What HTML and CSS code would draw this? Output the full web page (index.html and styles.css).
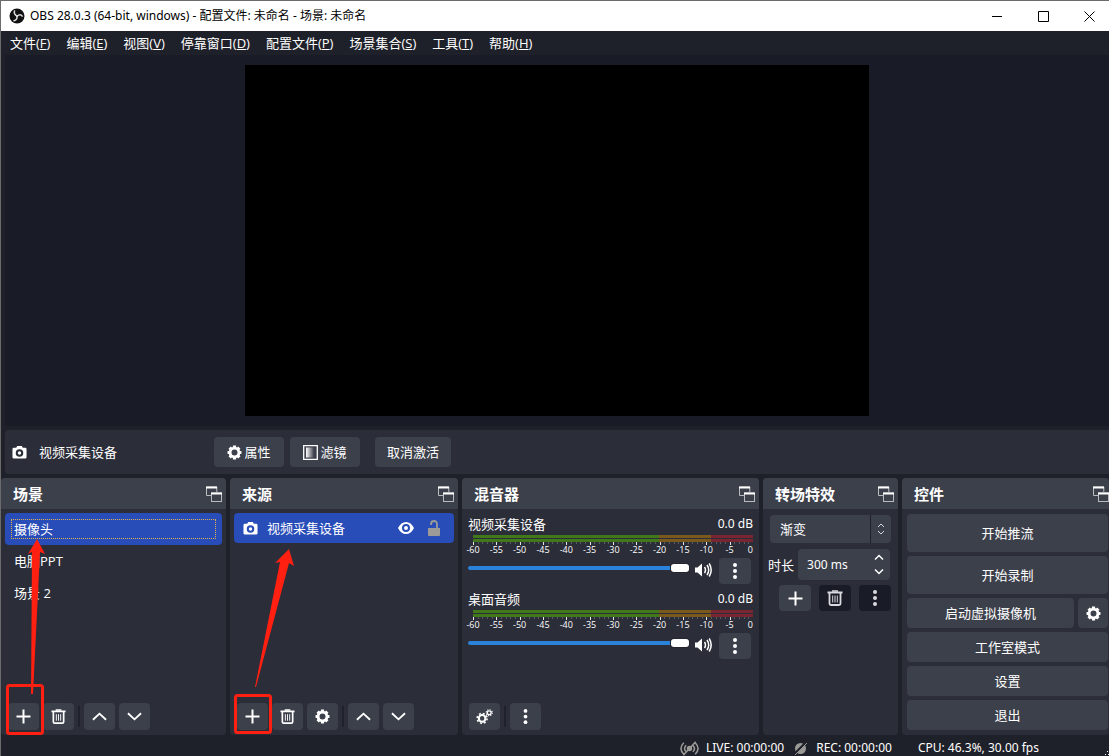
FILE: index.html
```html
<!DOCTYPE html>
<html lang="zh-CN">
<head>
<meta charset="utf-8">
<title>OBS 28.0.3</title>
<link rel="stylesheet" href="styles.css">
</head>
<body>
<svg class="defs" aria-hidden="true">
  <defs>
    <symbol id="i-camera" viewBox="0 0 16 16"><path fill-rule="evenodd" d="M2 3h2.500l1-2h5l1 2H14q1.500 0 1.500 1.500v8.500q0 1.500-1.500 1.500H2q-1.500 0-1.500-1.500V4.500Q.5 3 2 3zM8 4.500a4 4 0 1 0 0 8 4 4 0 0 0 0-8zm0 2.200a1.800 1.800 0 1 1 0 3.600 1.800 1.800 0 0 1 0-3.600z"/></symbol>
    <symbol id="i-gear" viewBox="0 0 16 16"><circle cx="8" cy="8" r="4.700" fill="none" stroke="currentColor" stroke-width="3"/><path d="M8 .6v3M8 12.400v3M.6 8h3M12.400 8h3M2.800 2.800l2 2M11.200 11.200l2 2M2.800 13.200l2-2M11.200 4.800l2-2" stroke="currentColor" stroke-width="3.400"/></symbol>
    <symbol id="i-gears" viewBox="0 0 18 18"><g fill="none" stroke="currentColor"><circle cx="6.500" cy="11" r="3.500" stroke-width="2.200"/><circle cx="6.500" cy="11" r="5.300" stroke-width="1.600" stroke-dasharray="2.100 2.060"/><circle cx="14" cy="5" r="2" stroke-width="1.400"/><circle cx="14" cy="5" r="3.200" stroke-width="1.200" stroke-dasharray="1.260 1.250"/></g></symbol>
    <symbol id="i-plus" viewBox="0 0 15 15"><path d="M7.500 .5v14M.5 7.500h14" fill="none" stroke="currentColor" stroke-width="2"/></symbol>
    <symbol id="i-trash" viewBox="0 0 16 16"><g fill="none" stroke="currentColor"><path d="M.5 2.500h15" stroke-width="2"/><path d="M5 1h6" stroke-width="1.500"/><path d="M2.500 3v10.500q0 1.500 1.500 1.500h8q1.500 0 1.500-1.500V3" stroke-width="1.800"/><path d="M5.700 5.500v7M8 5.500v7M10.300 5.500v7" stroke-width="1"/></g></symbol>
    <symbol id="i-up" viewBox="0 0 16 16"><path d="M1 11.500L8 5l7 6.500" fill="none" stroke="currentColor" stroke-width="2"/></symbol>
    <symbol id="i-down" viewBox="0 0 16 16"><path d="M1 4.500L8 11l7-6.500" fill="none" stroke="currentColor" stroke-width="2"/></symbol>
    <symbol id="i-dots" viewBox="0 0 16 16"><circle cx="8" cy="2" r="2"/><circle cx="8" cy="8" r="2"/><circle cx="8" cy="14" r="2"/></symbol>
    <symbol id="i-float" viewBox="0 0 16 16"><g fill="none" stroke="currentColor"><path d="M5 9.500H.5V1h10.300v5" stroke="#b9bbc0"/><path d="M0 1.500h11" stroke-width="2"/><rect x="5.500" y="7" width="10" height="8.500" stroke="#b9bbc0"/><path d="M5 7.500h11" stroke-width="2"/></g></symbol>
    <symbol id="i-speaker" viewBox="0 0 17 16"><path d="M0 5.500h2.500L7 1.500v13L2.500 10.500H0z"/><path d="M9.500 5q2 3 0 6M12 3q3.400 5 0 10M14.200 1.500q4 6.500 0 13" fill="none" stroke="currentColor" stroke-width="1.500"/></symbol>
  </defs>
</svg>

<div class="window">
  <header class="titlebar">
    <svg class="logo" viewBox="0 0 16 16" aria-hidden="true"><circle cx="8" cy="8" r="7.500" fill="#111"/><g fill="none" stroke="#ddd" stroke-width="1.500" stroke-linecap="round"><path d="M8 8.200Q4.500 6 5.500 3"/><path d="M8 8.200Q11.500 5.500 13.200 8.200"/><path d="M8 8.200Q8.500 12 5 12.700"/></g></svg>
    <h1 class="title">OBS 28.0.3 (64-bit, windows) - 配置文件: 未命名 - 场景: 未命名</h1>
    <div class="winbuttons">
      <button aria-label="最小化"><svg viewBox="0 0 11 11"><path d="M0 5.500h10"/></svg></button>
      <button aria-label="最大化"><svg viewBox="0 0 11 11"><path d="M.5.5h10v10H.5z"/></svg></button>
      <button aria-label="关闭"><svg viewBox="0 0 11 11"><path d="M.5.5l10 10M10.500.5l-10 10"/></svg></button>
    </div>
  </header>

  <nav class="menubar">
    <button>文件(<u>F</u>)</button><button>编辑(<u>E</u>)</button><button>视图(<u>V</u>)</button><button>停靠窗口(<u>D</u>)</button><button>配置文件(<u>P</u>)</button><button>场景集合(<u>S</u>)</button><button>工具(<u>T</u>)</button><button>帮助(<u>H</u>)</button>
  </nav>

  <main class="preview"><div class="canvas"></div></main>

  <section class="context">
    <svg class="icon15"><use href="#i-camera"/></svg>
    <span class="context-name">视频采集设备</span>
    <div class="context-actions">
      <button class="btn"><svg class="icon15"><use href="#i-gear"/></svg>属性</button>
      <button class="btn"><svg class="icon15" viewBox="0 0 15 15"><defs><linearGradient id="fade"><stop offset="0" stop-color="#fff"/><stop offset="1" stop-color="#fff" stop-opacity="0"/></linearGradient></defs><path d="M.7.7h13.600v13.600H.7z" fill="none" stroke="#fff" stroke-width="1.300"/><path d="M3 2.500h8v10H3z" fill="url(#fade)"/></svg>滤镜</button>
      <button class="btn deactivate">取消激活</button>
    </div>
  </section>

  <div class="docks">
    <section class="dock">
      <header><h2>场景</h2><svg class="icon16"><use href="#i-float"/></svg></header>
      <ul class="list">
        <li class="scene selected"><span>摄像头</span></li>
        <li class="scene"><span>电脑PPT</span></li>
        <li class="scene"><span>场景 2</span></li>
      </ul>
      <div class="tools">
        <button class="tool" aria-label="添加"><svg class="icon15"><use href="#i-plus"/></svg></button>
        <button class="tool" aria-label="删除"><svg class="icon15"><use href="#i-trash"/></svg></button>
        <i class="sep"></i>
        <button class="tool" aria-label="上移"><svg class="icon15"><use href="#i-up"/></svg></button>
        <button class="tool" aria-label="下移"><svg class="icon15"><use href="#i-down"/></svg></button>
      </div>
    </section>

    <section class="dock">
      <header><h2>来源</h2><svg class="icon16"><use href="#i-float"/></svg></header>
      <ul class="list">
        <li class="source selected"><svg class="icon15"><use href="#i-camera"/></svg><span>视频采集设备</span>
          <svg class="eye" viewBox="0 0 16 12"><path fill-rule="evenodd" d="M0 6Q3 0 8 0t8 6q-3 6-8 6T0 6zm8-4a4 4 0 1 0 0 8 4 4 0 0 0 0-8zm0 2a2 2 0 1 1 0 4 2 2 0 0 1 0-4z"/></svg>
          <svg class="lock" viewBox="0 0 12 16"><path d="M0 8h12v7q0 1-1 1H1q-1 0-1-1z"/><path d="M9 8V4.500Q9 1 6 1T3 4.500V5" fill="none" stroke="currentColor" stroke-width="1.800"/></svg>
        </li>
      </ul>
      <div class="tools">
        <button class="tool" aria-label="添加"><svg class="icon15"><use href="#i-plus"/></svg></button>
        <button class="tool" aria-label="删除"><svg class="icon15"><use href="#i-trash"/></svg></button>
        <button class="tool" aria-label="属性"><svg class="icon15"><use href="#i-gear"/></svg></button>
        <i class="sep"></i>
        <button class="tool" aria-label="上移"><svg class="icon15"><use href="#i-up"/></svg></button>
        <button class="tool" aria-label="下移"><svg class="icon15"><use href="#i-down"/></svg></button>
      </div>
    </section>

    <section class="dock">
      <header><h2>混音器</h2><svg class="icon16"><use href="#i-float"/></svg></header>
      <div class="mixer">
        <div class="channel">
          <div class="channel-head"><label for="v1">视频采集设备</label><span class="latin">0.0 dB</span></div>
          <div class="meter"><div class="bar"></div><div class="bar"></div><div class="ticks"></div>
            <div class="scale"><span>-60</span><span>-55</span><span>-50</span><span>-45</span><span>-40</span><span>-35</span><span>-30</span><span>-25</span><span>-20</span><span>-15</span><span>-10</span><span>-5</span><span>0</span></div>
          </div>
          <div class="fader"><input id="v1" type="range" value="100"><svg class="speaker"><use href="#i-speaker"/></svg><button class="more" aria-label="更多"><svg class="icon16"><use href="#i-dots"/></svg></button></div>
        </div>
        <div class="channel">
          <div class="channel-head"><label for="v2">桌面音频</label><span class="latin">0.0 dB</span></div>
          <div class="meter"><div class="bar"></div><div class="bar"></div><div class="ticks"></div>
            <div class="scale"><span>-60</span><span>-55</span><span>-50</span><span>-45</span><span>-40</span><span>-35</span><span>-30</span><span>-25</span><span>-20</span><span>-15</span><span>-10</span><span>-5</span><span>0</span></div>
          </div>
          <div class="fader"><input id="v2" type="range" value="100"><svg class="speaker"><use href="#i-speaker"/></svg><button class="more" aria-label="更多"><svg class="icon16"><use href="#i-dots"/></svg></button></div>
        </div>
      </div>
      <div class="tools">
        <button class="tool" aria-label="高级音频属性"><svg class="icon17"><use href="#i-gears"/></svg></button>
        <i class="sep"></i>
        <button class="tool" aria-label="更多"><svg class="icon15"><use href="#i-dots"/></svg></button>
      </div>
    </section>

    <section class="dock">
      <header><h2>转场特效</h2><svg class="icon16"><use href="#i-float"/></svg></header>
      <div class="transitions">
        <div class="combo"><select aria-label="转场"><option>渐变</option></select><svg class="combo-arrows" viewBox="0 0 8 12"><path d="M1 4l3-3 3 3M1 8l3 3 3-3"/></svg></div>
        <div class="duration"><label for="dur">时长</label>
          <div class="spin"><input id="dur" class="latin" type="text" value="300 ms"><div class="spin-arrows"><button aria-label="增加"><svg viewBox="0 0 8 5"><path d="M0 4.500l4-4 4 4"/></svg></button><button aria-label="减少"><svg viewBox="0 0 8 5"><path d="M0 .5l4 4 4-4"/></svg></button></div></div>
        </div>
        <div class="trans-tools">
          <button class="more" aria-label="添加"><svg class="icon15"><use href="#i-plus"/></svg></button>
          <button class="more off" aria-label="删除"><svg class="icon16"><use href="#i-trash"/></svg></button>
          <button class="more off" aria-label="更多"><svg class="icon16"><use href="#i-dots"/></svg></button>
        </div>
      </div>
    </section>

    <section class="dock last">
      <header><h2>控件</h2><svg class="icon16"><use href="#i-float"/></svg></header>
      <div class="controls">
        <button class="btn tall">开始推流</button>
        <button class="btn tall">开始录制</button>
        <div class="vcam"><button class="btn">启动虚拟摄像机</button><button class="btn" aria-label="虚拟摄像机设置"><svg class="icon15"><use href="#i-gear"/></svg></button></div>
        <button class="btn">工作室模式</button>
        <button class="btn">设置</button>
        <button class="btn">退出</button>
      </div>
    </section>
  </div>

  <footer class="status latin">
    <span class="stat"><svg class="live" viewBox="0 0 20 15"><g fill="none" stroke="currentColor" stroke-width="1.600"><path d="M4 1.500q-6 6 0 12M6.500 4q-3.500 3.500 0 7M16 1.500q6 6 0 12M13.500 4q3.500 3.500 0 7M3.500 14.500L16.500.5"/></g><circle cx="10" cy="7.500" r="2.800"/></svg>LIVE: 00:00:00</span>
    <span class="stat rec"><svg class="disc" viewBox="0 0 13 13"><circle cx="6.500" cy="6.500" r="5.500"/><path d="M0 12.500L12 .5" stroke="#1f212a" stroke-width="2.600"/><path d="M1 13L13 1" stroke="currentColor"/></svg>REC: 00:00:00</span>
    <span class="stat cpu">CPU: 46.3%, 30.00 fps</span>
    <svg class="grip" viewBox="0 0 4 4"><path d="M2 0h1v1H2zM0 3h1v1H0zM3 3h1v1H3z"/></svg>
  </footer>

  <svg class="marks" aria-hidden="true">
    <path d="M37 539l8 15-5-2-7 142h-2l1-142-4 2z"/>
    <path d="M289 549l5 17-5-3-33 124h-1l25-125-5 1z"/>
    <rect x="7.500" y="685.500" width="35" height="48" rx="2"/>
    <rect x="235.500" y="695.500" width="35" height="37" rx="2"/>
  </svg>
</div>
</body>
</html>
```
FILE: styles.css
```css
* { box-sizing: border-box; }
body, h1, h2, ul { margin: 0; padding: 0; }
body, button, input, select {
  font-family: "Open Sans", "Noto Sans CJK SC", sans-serif;
  font-size: 13px;
  line-height: 18px;
  color: #fff;
}
button { border: 0; padding: 0; background: none; }
svg { display: block; flex: none; fill: currentColor; }
.latin { font-family: "Noto Sans", "Noto Sans CJK SC", sans-serif; font-size: 12px; }
.defs { position: absolute; width: 0; height: 0; }
.icon15 { width: 15px; height: 15px; }
.icon16 { width: 16px; height: 16px; }
.icon17 { width: 17px; height: 17px; }

.window {
  position: relative;
  display: flex;
  flex-direction: column;
  height: 100vh;
  overflow: hidden;
  background: #1f212a;
  border: solid #6b6b6b;
  border-width: 1px 0 0 1px;
}

.titlebar { display: flex; align-items: center; height: 30px; padding-left: 8px; background: #fff; color: #000; flex: none; }
.logo { width: 16px; height: 16px; margin-right: 5px; }
.title { flex: 1; font-family: "Noto Sans", "Noto Sans CJK SC", sans-serif; font-size: 12px; font-weight: 400; white-space: nowrap; }
.winbuttons { display: flex; gap: 7px; }
.winbuttons button { display: grid; place-items: center; width: 39px; height: 30px; }
.winbuttons svg { width: 11px; height: 11px; fill: none; stroke: #000; }

.menubar { display: flex; gap: 16px; height: 24px; padding-left: 9px; flex: none; }
.menubar button { white-space: nowrap; }

.preview { flex: 1; min-height: 0; display: flex; justify-content: center; margin-left: 4px; padding: 10px 0; background: #191b26; }
.canvas { height: 100%; aspect-ratio: 16 / 9; background: #000; }

.context { display: flex; align-items: center; height: 44px; margin: 4px 0 4px 4px; padding-left: 7px; background: #2b2d38; border-radius: 4px 0 0 4px; flex: none; }
.context-name { width: 175px; margin-left: 12px; }
.context-actions { display: flex; gap: 6px; }
.btn { display: flex; align-items: center; justify-content: center; gap: 2px; height: 30px; background: #3c404b; border-radius: 4px; }
.context .btn { width: 70px; }
.context .deactivate { width: 76px; margin-left: 9px; }

.docks { display: grid; grid-template-columns: minmax(0, 225fr) minmax(0, 228fr) minmax(0, 297fr) minmax(0, 135fr) minmax(0, 207fr); gap: 4px; flex: none; }
.dock { display: flex; flex-direction: column; background: #2b2d38; border-radius: 4px; overflow: hidden; }
.dock header { display: flex; align-items: center; justify-content: space-between; height: 31px; padding: 0 4px 0 12px; background: #3c404b; flex: none; }
.dock h2 { font-size: 15px; font-weight: 700; line-height: 20px; }
.last header { padding-right: 0; }

.list { list-style: none; padding: 4px; flex: 1; }
.scene { height: 32px; padding: 6px; border-radius: 4px; }
.scene span { display: block; height: 20px; padding-left: 3px; line-height: 20px; }
.selected { background: #284cb8; }
.scene.selected span { padding-left: 2px; line-height: 18px; border: 1px dotted #e0b252; }
.source { display: flex; align-items: center; height: 30px; padding: 0 14px 0 9px; border-radius: 4px; }
.source span { flex: 1; margin-left: 9px; }
.eye { width: 16px; height: 12px; margin-right: 14px; }
.lock { width: 12px; height: 16px; color: #9c9a96; }

.tools { display: flex; gap: 4px; padding: 0 7px 5px; }
.tool { display: grid; place-items: center; width: 31px; height: 27px; background: #3c404b; border-radius: 4px; }
.sep { width: 2px; height: 21px; margin-top: 3px; background: #20222b; }

.mixer { flex: 1; padding: 6px 6px 0; }
.channel { height: 75px; }
.channel-head { display: flex; justify-content: space-between; height: 20px; }
.meter { margin-left: 5px; }
.bar { height: 3px; margin-bottom: 1px; background: linear-gradient(90deg, #40781a 66.6%, #7a5a1c 66.6% 85%, #7a2632 85%); }
.ticks {
  height: 3px;
  margin-top: -1px;
  background:
    repeating-linear-gradient(90deg, #e4e5e8 0 1px, transparent 1px 8.333%),
    repeating-linear-gradient(90deg, #5a5c65 0 1px, transparent 1px 1.6667%) 0 0 / 100% 2px no-repeat;
}
.scale { display: flex; justify-content: space-between; height: 9px; font-size: 9px; line-height: 9px; }
.scale span { display: flex; justify-content: center; width: 0; }
.scale span:last-child { justify-content: flex-end; }
.fader { display: flex; align-items: flex-start; padding-right: 2px; }
.fader input { flex: 1; min-width: 0; height: 9px; margin: 9px 0 0; appearance: none; background: none; }
.fader input::-webkit-slider-runnable-track { height: 4px; background: #2a82da; border-radius: 2px; }
.fader input::-webkit-slider-thumb { appearance: none; width: 18px; height: 8px; margin-top: -2px; background: #fff; border-radius: 3px; box-shadow: 0 0 0 1px #23252f; }
.speaker { width: 17px; height: 16px; margin: 8px 7px 0 6px; }
.more { display: grid; place-items: center; width: 32px; height: 26px; background: #3c404b; border-radius: 4px; }
.fader .more { margin-top: 4px; }

.transitions { display: flex; flex-direction: column; padding: 6px 7px 0; }
.combo { position: relative; }
.combo select { display: block; width: 100%; height: 28px; padding: 0 10px; border: 0; border-radius: 4px; appearance: none; background: linear-gradient(90deg, #3c404b calc(100% - 21px), #20222b calc(100% - 21px) calc(100% - 20px), #3c404b calc(100% - 20px)); }
.combo-arrows { position: absolute; right: 6px; top: 8px; width: 8px; height: 12px; fill: none; stroke: #d5d6da; pointer-events: none; }
.duration { display: flex; align-items: center; gap: 4px; margin: 6px 1px 5px -2px; }
.duration label { white-space: nowrap; }
.spin { display: flex; flex: 1; min-width: 0; height: 31px; padding: 0 7px 0 9px; background: #3c404b; border-radius: 4px; }
.spin input { flex: 1; min-width: 0; width: 0; padding: 0; border: 0; background: none; }
.spin-arrows { display: flex; flex-direction: column; justify-content: center; gap: 9px; }
.spin-arrows svg { width: 8px; height: 5px; fill: none; stroke: #fff; stroke-width: 1.5; overflow: visible; }
.trans-tools { display: flex; justify-content: flex-end; gap: 8px; }
.off { background: #191b26; color: #d8dae0; }

.controls { display: flex; flex-direction: column; gap: 4px; padding: 5px 1px 5px 5px; }
.tall { height: 38px; }
.vcam { display: grid; grid-template-columns: 1fr 30px; gap: 4px; }

.status { position: relative; display: flex; align-items: center; justify-content: flex-end; height: 21px; padding: 5px 70px 0 0; flex: none; white-space: nowrap; }
.stat { display: flex; align-items: center; gap: 7px; }
.live { width: 19px; height: 15px; color: #9c9a96; }
.disc { width: 13px; height: 13px; margin-right: 2px; color: #9c9a96; }
.rec { margin-left: 10px; }
.cpu { margin-left: 26px; }
.grip { position: absolute; right: 0; bottom: 1px; width: 4px; height: 4px; }

.marks { position: absolute; left: -1px; top: -1px; width: 300px; height: 756px; fill: #ff2012; pointer-events: none; }
.marks rect { fill: none; stroke: #ff2012; stroke-width: 3; }
```
